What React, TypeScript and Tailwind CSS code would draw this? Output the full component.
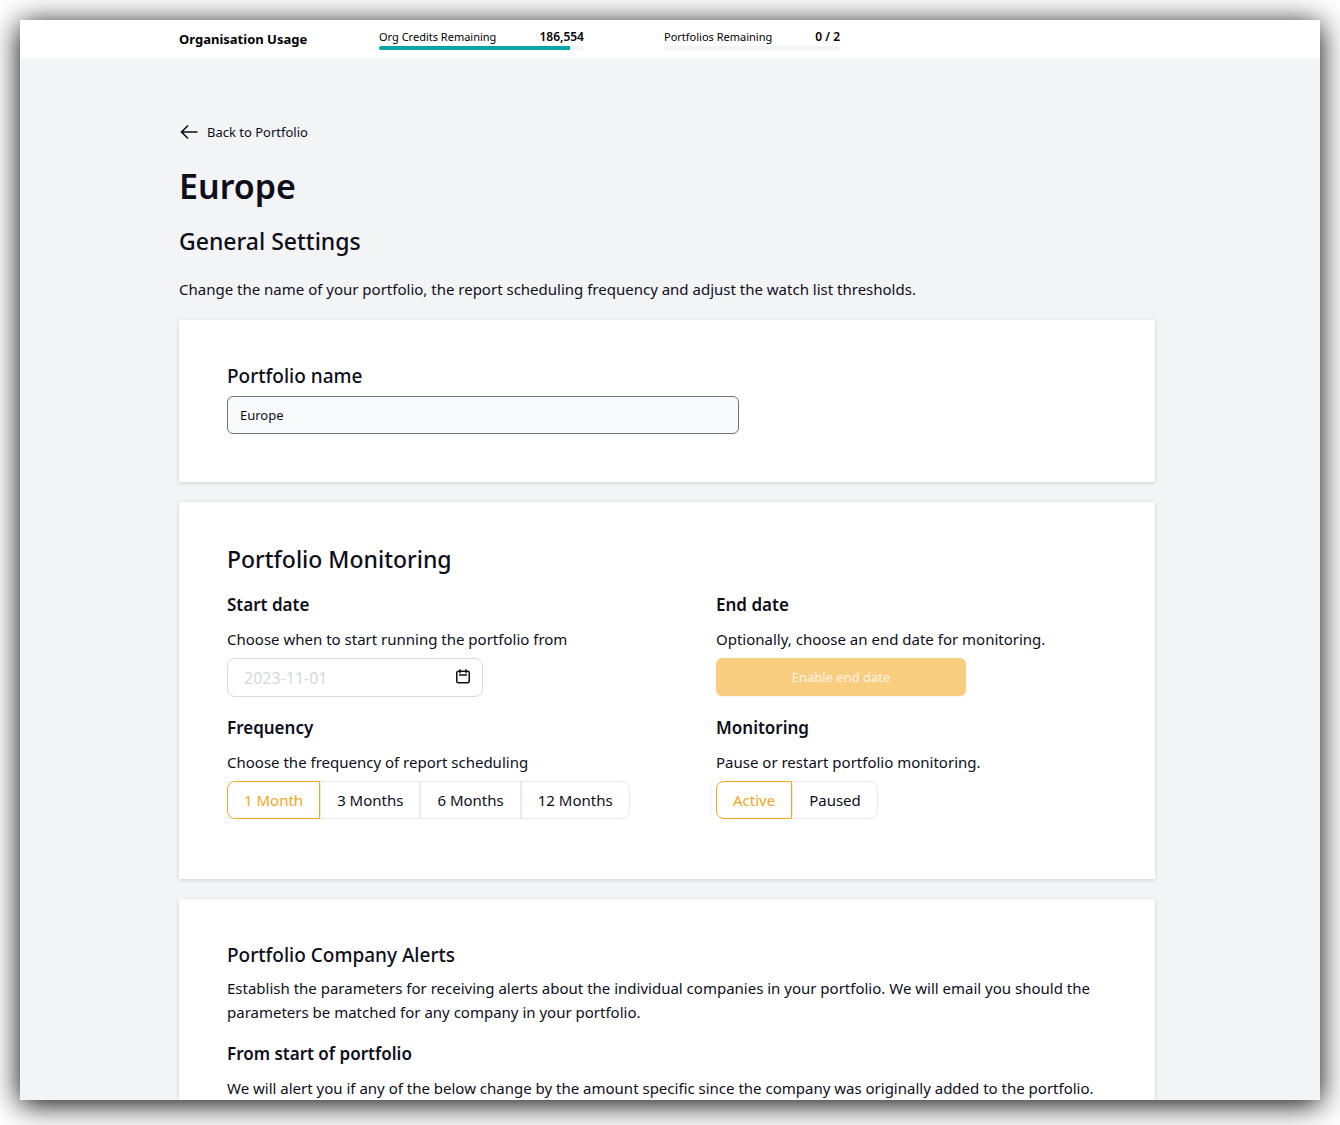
import { useState } from "react";

type UsageProps = { label: string; value: string; percent: number; className: string };

function Usage({ label, value, percent, className }: UsageProps) {
  return (
    <div className={className}>
      <div className="flex justify-between text-xs leading-4 whitespace-nowrap">
        <span className="text-[11px] leading-4">{label}</span>
        <strong className="font-semibold">{value}</strong>
      </div>
      <div className="mt-px h-1 overflow-hidden rounded-full bg-[#f3f4f6]">
        <div className="h-full bg-[#00a5a8]" style={{ width: `${percent}%` }} />
      </div>
    </div>
  );
}

type SegmentedProps = { name: string; label: string; options: string[] };

function Segmented({ name, label, options }: SegmentedProps) {
  const [selected, setSelected] = useState(options[0]);
  return (
    <div role="radiogroup" aria-label={label} className="mt-[7px] flex h-[38px]">
      {options.map((option) => (
        <label
          key={option}
          className="relative flex cursor-pointer items-center border border-[#e9ebee] px-4 whitespace-nowrap first:rounded-l-lg last:rounded-r-lg has-checked:border-[#f5a623] has-checked:text-[#f5a623]"
        >
          <input
            type="radio"
            name={name}
            value={option}
            checked={selected === option}
            onChange={() => setSelected(option)}
            className="sr-only"
          />
          {option}
        </label>
      ))}
    </div>
  );
}

function BackArrow() {
  return (
    <svg width="20" height="20" viewBox="0 0 20 20" fill="none" stroke="currentColor" strokeWidth="1.6" aria-hidden="true">
      <path d="M18.5 10H2.5M9 3.5 2.5 10 9 16.5" />
    </svg>
  );
}

function CalendarIcon() {
  return (
    <svg width="16" height="18" viewBox="0 0 16 18" fill="none" stroke="currentColor" strokeWidth="1.5" aria-hidden="true">
      <rect x="2.75" y="2.25" width="12.5" height="11.5" rx="1.5" />
      <path d="M6 .3v4M12 .3v4M5 6h8" />
    </svg>
  );
}

const card = "bg-white px-12 shadow-[0_1px_4px_rgba(0,0,0,0.15)]";

export default function App() {
  const [name, setName] = useState("Europe");
  return (
    <div className="h-screen bg-white px-5 pt-5 pb-[25px] font-['Noto_Sans','Open_Sans',sans-serif] text-[15px] leading-6 text-[#0e0e1a]">
      <div className="h-full overflow-hidden bg-[#f3f4f6] shadow-[0_4px_28px_#000]">
        <header className="bg-white pr-1.5">
          <div className="mx-auto flex h-[38px] max-w-[976px] items-center text-black">
            <div className="w-[200px] text-[13px] font-bold">Organisation Usage</div>
            <div className="flex gap-20">
              <Usage label="Org Credits Remaining" value="186,554" percent={93} className="w-[205px]" />
              <Usage label="Portfolios Remaining" value="0 / 2" percent={0} className="w-44" />
            </div>
          </div>
        </header>

        <main className="pr-1.5">
          <div className="mx-auto max-w-[976px] pt-16">
            <a href="#portfolio" className="inline-flex items-center gap-2 text-[13px] leading-5">
              <BackArrow />
              Back to Portfolio
            </a>
            <h1 className="mt-[18px] text-[34px] leading-10 font-semibold">Europe</h1>
            <h2 className="mt-[19px] text-[23px] leading-8 font-medium">General Settings</h2>
            <p className="mt-5">
              Change the name of your portfolio, the report scheduling frequency and adjust the watch list thresholds.
            </p>

            <section className={`${card} mt-[19px] pt-10 pb-12`}>
              <label htmlFor="portfolio-name" className="block text-[19px] leading-8 font-medium">
                Portfolio name
              </label>
              <input
                id="portfolio-name"
                type="text"
                value={name}
                onChange={(event) => setName(event.target.value)}
                className="mt-1 h-[38px] w-full max-w-lg rounded-md border border-[#6b7280] bg-[#f9fafb] px-3 text-[13px]"
              />
            </section>

            <section className={`${card} mt-5 pt-10 pb-[60px]`}>
              <h2 className="text-[23px] leading-[34px] font-medium">Portfolio Monitoring</h2>
              <div className="mt-[15px] grid grid-cols-2 gap-x-[98px] gap-y-[17px]">
                <div>
                  <h4 className="text-[17px] leading-7 font-semibold">Start date</h4>
                  <p className="mt-2">Choose when to start running the portfolio from</p>
                  <div className="mt-[7px] flex h-[39px] w-64 items-center rounded-lg border border-[#d9d9de] pr-3 pl-4">
                    <input
                      type="text"
                      aria-label="Start date"
                      disabled
                      value="2023-11-01"
                      className="min-w-0 flex-1 text-base text-[#d5d7dc]"
                    />
                    <CalendarIcon />
                  </div>
                </div>
                <div>
                  <h4 className="text-[17px] leading-7 font-semibold">End date</h4>
                  <p className="mt-2">Optionally, choose an end date for monitoring.</p>
                  <button
                    type="button"
                    disabled
                    className="mt-[7px] block h-[38px] w-[250px] rounded-md bg-[#f9cd80] text-[13px] text-white/80 shadow-xs"
                  >
                    Enable end date
                  </button>
                </div>
                <div>
                  <h4 className="text-[17px] leading-7 font-semibold">Frequency</h4>
                  <p className="mt-2">Choose the frequency of report scheduling</p>
                  <Segmented name="frequency" label="Frequency" options={["1 Month", "3 Months", "6 Months", "12 Months"]} />
                </div>
                <div>
                  <h4 className="text-[17px] leading-7 font-semibold">Monitoring</h4>
                  <p className="mt-2">Pause or restart portfolio monitoring.</p>
                  <Segmented name="monitoring" label="Monitoring" options={["Active", "Paused"]} />
                </div>
              </div>
            </section>

            <section className={`${card} mt-5 pt-10 pb-12`}>
              <h3 className="text-[19px] leading-8 font-medium">Portfolio Company Alerts</h3>
              <p className="mt-[5px]">
                Establish the parameters for receiving alerts about the individual companies in your portfolio. We will
                email you should the parameters be matched for any company in your portfolio.
              </p>
              <h4 className="mt-4 text-[17px] leading-7 font-semibold">From start of portfolio</h4>
              <p className="mt-2">
                We will alert you if any of the below change by the amount specific since the company was originally
                added to the portfolio.
              </p>
            </section>
          </div>
        </main>
      </div>
    </div>
  );
}
